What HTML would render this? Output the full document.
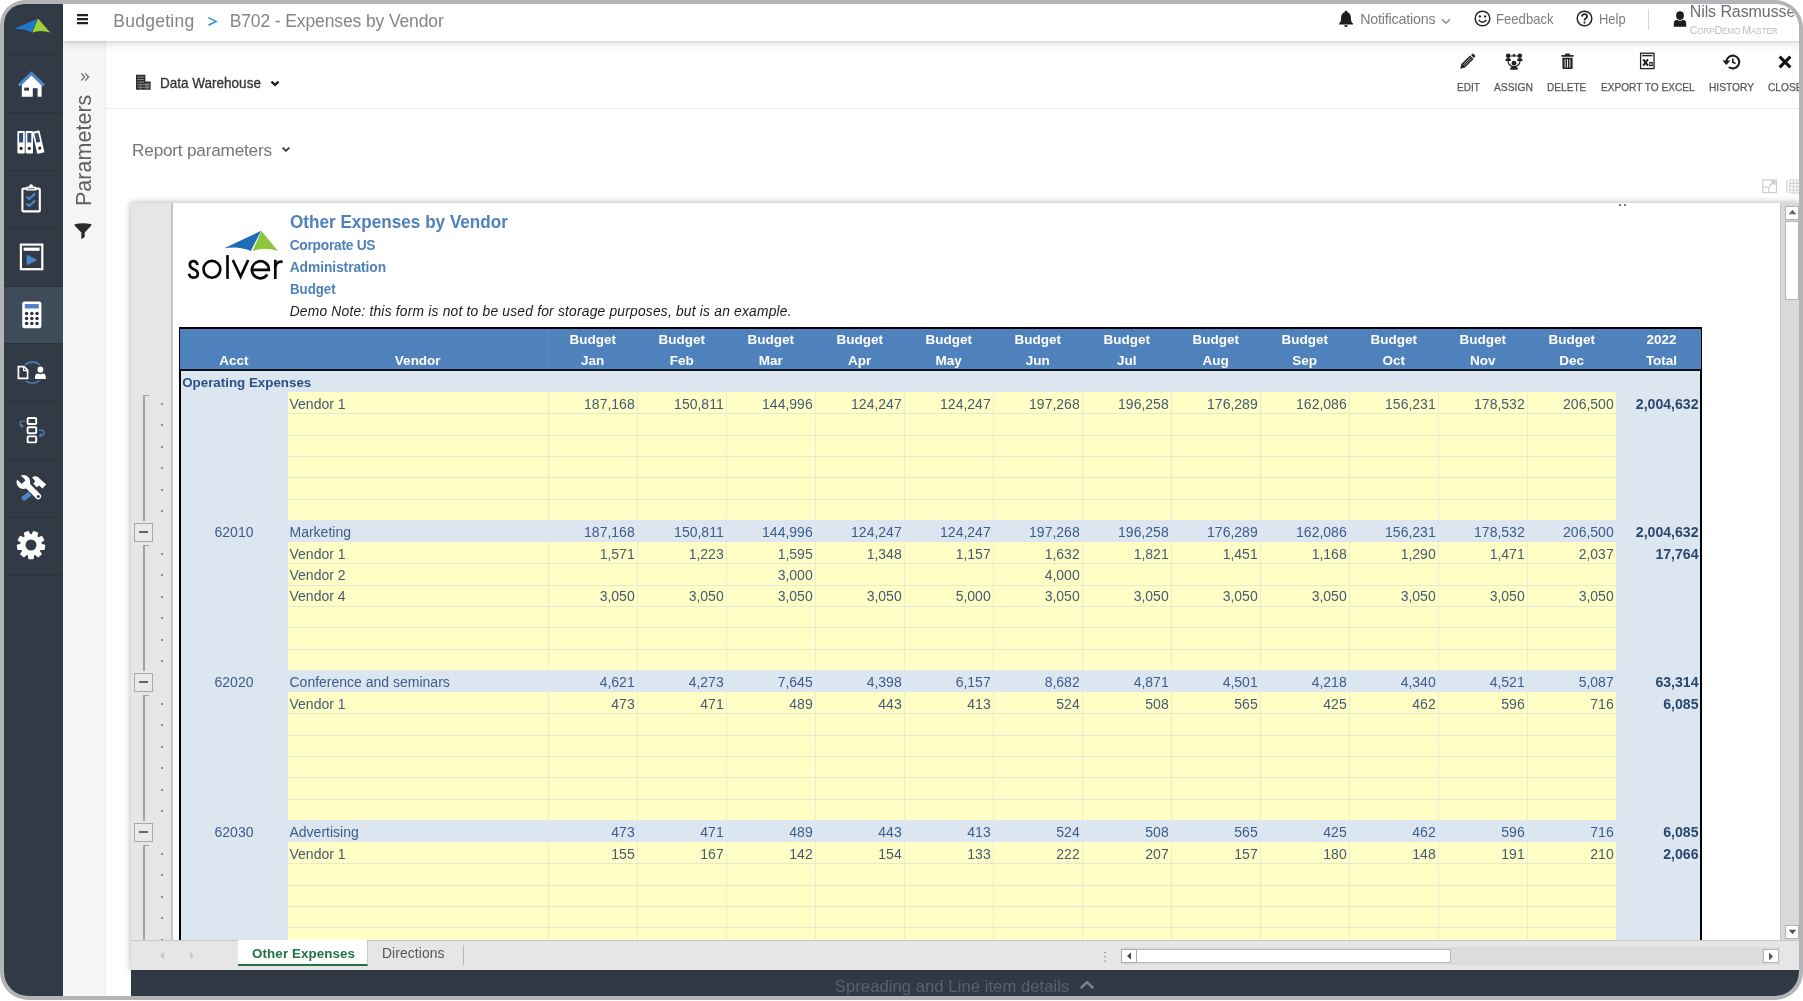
<!DOCTYPE html>
<html>
<head>
<meta charset="utf-8">
<title>B702 - Expenses by Vendor</title>
<style>
*{box-sizing:border-box;margin:0;padding:0}
html,body{width:1803px;height:1001px;overflow:hidden;background:#fff}
body{font-family:"Liberation Sans",sans-serif;position:relative;color:#333}
i,b{font-style:normal;display:block}
.frame{position:absolute;left:0;top:0;width:1803px;height:1000px;border-radius:25px 28px 28px 28px;background:#b2b4b7;overflow:hidden}
.inner{position:absolute;left:4px;top:4px;width:1795px;height:992px;border-radius:20px 24px 24px 24px;background:#fff;overflow:hidden}
.pg{will-change:transform;position:absolute;left:-4px;top:-4px;width:1803px;height:1001px}
.abs{position:absolute}
/* sidebar */
.side{position:absolute;left:0;top:0;width:63px;height:1001px;background:#323a45}
.side .sep{position:absolute;left:0;width:63px;height:1px;background:#2c333d}
.side .act{position:absolute;left:0;top:286.5px;width:63px;height:57.4px;background:#3e4b59}
.side svg{position:absolute}
/* topbar */
.top{position:absolute;left:63px;top:0;width:1740px;height:41px;background:#fff;box-shadow:0 1px 2px rgba(0,0,0,.11),0 3px 8px rgba(0,0,0,.12);z-index:5}
.top>span,.top>svg{position:absolute;white-space:nowrap}
.crumb{font-size:17px;color:#777;top:10px;letter-spacing:-.2px}
.tl{font-size:14.5px;color:#777;top:11px}
/* params column */
.pcol{position:absolute;left:63px;top:41px;width:43px;height:960px;background:#f5f5f5;border-right:1px solid #ececec}
.content{position:absolute;left:106px;top:41px;width:1697px;height:960px;background:#fff}
.tb span{position:absolute;font-size:12px;color:#555;top:80px;white-space:nowrap;transform:translateX(-50%)}
.tb svg{position:absolute}
/* spreadsheet */
.sheet{position:absolute;left:131px;top:203px;width:1669px;height:767px;background:#fff;box-shadow:0 0 7px rgba(0,0,0,.33);overflow:hidden}
.sh{position:absolute;left:-131px;top:-203px;width:1803px;height:1001px}
.gut{position:absolute;left:131px;top:203px;width:42px;height:737px;background:#e6e6e6;border-right:2px solid #c4c4c4}
.ol{position:absolute;left:142.6px;width:6px;border-left:2px solid #a2a2a2;border-top:1.6px solid #a2a2a2}
.dot{position:absolute;left:161px;width:2px;height:2px;background:#8d8d8d}
.mb{position:absolute;left:134px;width:19px;height:19px;border:1px solid #a9a9a9;background:#e9e9e9}
.mb b{position:absolute;left:4px;top:7.5px;width:9px;height:2px;background:#666}
.tbl{position:absolute;left:179px;top:327px;width:1523px;height:660px;border:2px solid #000;border-bottom:none;background:#dce6f1}
.thead{position:absolute;left:180px;top:329px;width:1521px;height:42.3px;background:#4f81bd;border-bottom:2px solid #111;z-index:4}
.thead span{position:absolute;color:#fff;font-weight:bold;font-size:13.5px;text-align:center;white-space:nowrap;line-height:16px}
.thead .h1{top:3px}
.thead .h2{top:24.1px}
.thead i{position:absolute;left:368px;top:0;width:1px;height:40.3px;background:#5c8ac3}
.row{position:absolute;left:0;width:1803px;height:21.43px}
.rv::before{content:"";box-sizing:border-box;position:absolute;left:288px;top:0;width:1327.5px;height:21.43px;background:#ffffc6;border-top:1px solid #e6e9d2}
.rv.f::before{border-top:none}
.rs::before{content:"";box-sizing:border-box;position:absolute;left:288px;top:0;width:1327.5px;height:21.43px;background:#dce6f1;z-index:2}
.c{position:absolute;top:.8px;height:21.43px;line-height:23.4px;font-size:14px;color:#465a74;white-space:nowrap;z-index:3}
.rs .c{color:#3e5c88}
.n{text-align:right}
.ac{text-align:center}
.c.t{font-weight:bold;color:#2c466e;font-size:14.1px}
.c.hd{font-weight:bold;color:#2e4f84;font-size:13.35px}
.vg{position:absolute;top:392px;width:1px;height:548px;background:rgba(200,212,228,.42);z-index:1}
.tabs{position:absolute;left:131px;top:940px;width:1669px;height:30px;background:#e6e6e6;border-top:1px solid #c6c6c6}
.bot{position:absolute;left:131px;top:969.6px;width:1672px;height:32px;background:#313946}
</style>
</head>
<body>
<div class="frame"><div class="inner"><div class="pg">

<!-- content background -->
<div class="content"></div>
<div class="pcol"></div>

<!-- toolbar area -->
<div class="abs" style="left:106px;top:108px;width:1697px;height:1px;background:#efefef"></div>
<svg style="position:absolute;left:135px;top:74px;" width="17" height="17" viewBox="0 0 17 17"><path d="M1 .8 H10.4 V7.6 H15.6 V15.8 H1 Z" fill="#2b2b2b"/><path d="M2.2 3.1 H9.2 M2.2 5.6 H9.2 M2.2 8.1 H9.2 M2.2 10.6 H14.6 M2.2 13.1 H14.6" stroke="#9a9a9a" stroke-width=".9"/><path d="M11 9 V15 M13 9 V15 M5.6 11.6 V15.8" stroke="#8aa" stroke-width=".8"/></svg>
<span style="left:159.8px;top:73.08px;font-size:14.2px;line-height:20px;color:#333;letter-spacing:0px;white-space:nowrap;position:absolute;transform-origin:0 50%;transform:scaleX(0.9526);-webkit-text-stroke:.3px #333;">Data Warehouse</span>
<svg style="position:absolute;left:270px;top:79.6px;" width="10" height="8" viewBox="0 0 10 8"><path d="M1.5 1.6 L5 5 L8.5 1.6" fill="none" stroke="#1a1a1a" stroke-width="2.3"/></svg>
<span style="left:132.1px;top:140.34px;font-size:17.2px;line-height:20px;color:#757575;letter-spacing:-0.21px;white-space:nowrap;position:absolute;">Report parameters</span>
<svg style="position:absolute;left:281px;top:146px;" width="10" height="8" viewBox="0 0 10 8"><path d="M1.6 1.6 L5 4.8 L8.4 1.6" fill="none" stroke="#333" stroke-width="1.8"/></svg>
<span style="left:1456.6px;top:76.91px;font-size:11.8px;line-height:20px;color:#555;letter-spacing:0px;white-space:nowrap;position:absolute;transform-origin:0 50%;transform:scaleX(0.8483);-webkit-text-stroke:.25px #555;">EDIT</span>
<span style="left:1494.1px;top:76.91px;font-size:11.8px;line-height:20px;color:#555;letter-spacing:0px;white-space:nowrap;position:absolute;transform-origin:0 50%;transform:scaleX(0.8724);-webkit-text-stroke:.25px #555;">ASSIGN</span>
<span style="left:1547.2px;top:76.91px;font-size:11.8px;line-height:20px;color:#555;letter-spacing:0px;white-space:nowrap;position:absolute;transform-origin:0 50%;transform:scaleX(0.8561);-webkit-text-stroke:.25px #555;">DELETE</span>
<span style="left:1600.5px;top:76.91px;font-size:11.8px;line-height:20px;color:#555;letter-spacing:0px;white-space:nowrap;position:absolute;transform-origin:0 50%;transform:scaleX(0.8572);-webkit-text-stroke:.25px #555;">EXPORT TO EXCEL</span>
<span style="left:1709px;top:76.91px;font-size:11.8px;line-height:20px;color:#555;letter-spacing:0px;white-space:nowrap;position:absolute;transform-origin:0 50%;transform:scaleX(0.8650);-webkit-text-stroke:.25px #555;">HISTORY</span>
<span style="left:1768.2px;top:76.91px;font-size:11.8px;line-height:20px;color:#555;letter-spacing:0px;white-space:nowrap;position:absolute;transform-origin:0 50%;transform:scaleX(0.8624);-webkit-text-stroke:.25px #555;">CLOSE</span>
<svg style="position:absolute;left:1459px;top:53px;" width="17" height="17" viewBox="0 0 17 17"><path d="M1.2 15.8 L2.4 11 L11 2.4 L14.6 6 L6 14.6 Z" fill="#222"/><path d="M12 2 L13.2 .9 Q13.9 .3 14.6 1 L16 2.4 Q16.7 3.1 16 3.8 L15 5 Z" fill="#222"/><path d="M4 11.8 L11.4 4.4 M5.2 13 L12.6 5.6" stroke="#fff" stroke-width=".6"/></svg>
<svg style="position:absolute;left:1504.5px;top:52.5px;" width="18" height="18" viewBox="0 0 18 18"><circle cx="3.2" cy="2.8" r="2.3" fill="#222"/><circle cx="14.8" cy="2.8" r="2.3" fill="#222"/><circle cx="9" cy="2.2" r="1.3" fill="#222"/><path d="M.4 8 Q.4 5 3.2 5 Q6 5 6 8 Z M12 8 Q12 5 14.8 5 Q17.6 5 17.6 8 Z" fill="#222"/><path d="M3 7.4 Q3 12 7 13 M15 7.4 Q15 12 11 13 M4.6 3 H13.4" fill="none" stroke="#222" stroke-width="1.2"/><circle cx="9" cy="10.2" r="2.4" fill="#222"/><path d="M5.2 16.8 Q5.2 12.8 9 12.8 Q12.8 12.8 12.8 16.8 Z" fill="#222"/></svg>
<svg style="position:absolute;left:1559.5px;top:52.9px;" width="15" height="17" viewBox="0 0 15 17"><path d="M5.2 .6 H9.8 V2 H13.6 V3.8 H1.4 V2 H5.2 Z" fill="#222"/><path d="M2.4 4.8 H12.6 V15 Q12.6 16 11.6 16 H3.4 Q2.4 16 2.4 15 Z" fill="#222"/><path d="M5.1 6.2 V14.6 M7.5 6.2 V14.6 M9.9 6.2 V14.6" stroke="#fff" stroke-width=".9"/></svg>
<svg style="position:absolute;left:1638.5px;top:51.8px;" width="17" height="18" viewBox="0 0 17 18"><rect x="1.6" y="1.2" width="13.4" height="15.4" fill="#fff" stroke="#222" stroke-width="1.3"/><path d="M3.2 3.6 H13.4" stroke="#222" stroke-width="1.5"/><path d="M4.2 7.4 L9 13.6 M9 7.4 L4.2 13.6" stroke="#1a1a1a" stroke-width="1.9"/><path d="M10.8 10.6 H13.2 V13.6 H10.8 Z" fill="none" stroke="#222" stroke-width="1.1"/></svg>
<svg style="position:absolute;left:1721.5px;top:52.5px;" width="19" height="18" viewBox="0 0 19 18"><path d="M4.4 9 A6.4 6.4 0 1 1 6.8 14" fill="none" stroke="#1c1c1c" stroke-width="2.1"/><path d="M.4 7.4 H8.4 L4.4 12 Z" fill="#1c1c1c"/><path d="M10.8 5.6 V9.3 L13.6 10.4" fill="none" stroke="#1c1c1c" stroke-width="1.6"/></svg>
<svg style="position:absolute;left:1777.5px;top:54.5px;" width="14" height="14" viewBox="0 0 14 14"><path d="M1.6 1.6 L12.4 12.4 M12.4 1.6 L1.6 12.4" stroke="#111" stroke-width="3"/></svg>
<svg style="position:absolute;left:1762px;top:179px;" width="16" height="15" viewBox="0 0 16 15"><rect x=".8" y=".8" width="13.6" height="12.8" fill="none" stroke="#cfcfcf" stroke-width="1.2"/><path d="M1.2 8.2 H6.8 V13.4" fill="none" stroke="#cfcfcf" stroke-width="1.2"/><path d="M7.6 7 L12.4 2.4 M8.8 2.2 H12.6 V6" fill="none" stroke="#c4c4c4" stroke-width="1.4"/></svg>
<svg style="position:absolute;left:1786px;top:179px;" width="14" height="15" viewBox="0 0 14 15"><path d="M1 1 V14 M3.4 1 H14 M3.4 4.4 H14 M3.4 7.8 H14 M3.4 11.2 H14 M3.4 14 H14 M3.8 1 V14 M7.4 1 V14 M11 1 V14" fill="none" stroke="#cfcfcf" stroke-width="1.1"/></svg>
<svg style="position:absolute;left:80px;top:71.5px;" width="10" height="10" viewBox="0 0 10 10"><path d="M1.2 1.4 L4.6 5 L1.2 8.6 M5.2 1.4 L8.6 5 L5.2 8.6" fill="none" stroke="#666" stroke-width="1.2"/></svg>
<span style="position:absolute;left:91px;top:206.3px;font-size:21.4px;line-height:20px;color:#5f5f5f;white-space:nowrap;transform-origin:0 0;transform:rotate(-90deg) translateY(-17.42px);letter-spacing:0.08px">Parameters</span>
<svg style="position:absolute;left:74px;top:223px;" width="18" height="17" viewBox="0 0 18 17"><path d="M.6 1.2 Q9 -0.8 17.4 1.2 V2.6 L10.7 9.4 V14 L7.3 16.2 V9.4 L.6 2.6 Z" fill="#2b2b2b"/></svg>

<!-- spreadsheet -->
<div class="sheet"><div class="sh">
<div class="gut"></div>
<i class="ol" style="top:395.13px;height:126.17px"></i>
<i class="dot" style="top:402.94px"></i>
<i class="dot" style="top:424.37px"></i>
<i class="dot" style="top:445.8px"></i>
<i class="dot" style="top:467.23px"></i>
<i class="dot" style="top:488.66px"></i>
<i class="dot" style="top:510.09px"></i>
<i class="mb" style="top:522.91px"><b></b></i>
<i class="ol" style="top:545.13px;height:126.17px"></i>
<i class="dot" style="top:552.94px"></i>
<i class="dot" style="top:574.37px"></i>
<i class="dot" style="top:595.8px"></i>
<i class="dot" style="top:617.23px"></i>
<i class="dot" style="top:638.66px"></i>
<i class="dot" style="top:660.09px"></i>
<i class="mb" style="top:672.91px"><b></b></i>
<i class="ol" style="top:695.13px;height:126.17px"></i>
<i class="dot" style="top:702.94px"></i>
<i class="dot" style="top:724.37px"></i>
<i class="dot" style="top:745.8px"></i>
<i class="dot" style="top:767.23px"></i>
<i class="dot" style="top:788.66px"></i>
<i class="dot" style="top:810.09px"></i>
<i class="mb" style="top:822.91px"><b></b></i>
<i class="ol" style="top:845.13px;height:94.87px"></i>
<i class="dot" style="top:852.94px"></i>
<i class="dot" style="top:874.37px"></i>
<i class="dot" style="top:895.8px"></i>
<i class="dot" style="top:917.23px"></i>
<i class="dot" style="top:938.66px"></i>
<svg style="position:absolute;left:180px;top:225px;" width="110" height="62" viewBox="0 0 110 62"><path d="M44.3 23.3 Q59 20.6 70.8 26 L81.1 5.8 Z" fill="#1f6cb6"/><path d="M81.5 6 L98 26 Q84.6 21.6 72.6 26 Z" fill="#8cc63f"/><g fill="none" stroke="#0a0a0a" stroke-width="2.7"><path d="M17.6 40 Q16.6 36 13.3 36 Q9.8 36.2 9.8 39.6 Q9.8 42.6 13.7 44.2 Q17.9 45.8 17.9 49 Q17.7 52.6 13.4 52.7 Q9.8 52.6 8.9 48.8"/><circle cx="31.9" cy="44.35" r="8.4"/><path d="M47.5 30.1 V53.9"/><path d="M52.8 35 L60.6 51.6 L68.2 35" stroke-linejoin="miter" stroke-miterlimit="8"/><path d="M71.8 44.9 H88.9 A8.5 8.5 0 1 0 87.4 49.6"/><path d="M95.3 34.8 V53.9 M95.3 43 Q95.6 36 102.6 36.8"/></g></svg>
<span style="left:289.7px;top:212.16px;font-size:18.6px;line-height:20px;color:#4f81bd;letter-spacing:0px;white-space:nowrap;position:absolute;font-weight:bold;transform-origin:0 50%;transform:scaleX(0.9209);">Other Expenses by Vendor</span>
<span style="left:289.7px;top:235.62px;font-size:13.8px;line-height:20px;color:#4f81bd;letter-spacing:-0.28px;white-space:nowrap;position:absolute;font-weight:bold;">Corporate US</span>
<span style="left:289.7px;top:257.92px;font-size:13.8px;line-height:20px;color:#4f81bd;letter-spacing:-0.07px;white-space:nowrap;position:absolute;font-weight:bold;">Administration</span>
<span style="left:289.7px;top:280.22px;font-size:13.8px;line-height:20px;color:#4f81bd;letter-spacing:0px;white-space:nowrap;position:absolute;font-weight:bold;transform-origin:0 50%;transform:scaleX(0.9595);">Budget</span>
<span style="left:289.7px;top:302.42px;font-size:13.8px;line-height:20px;color:#1a1a1a;letter-spacing:0.21px;white-space:nowrap;position:absolute;font-style:italic;">Demo Note: this form is not to be used for storage purposes, but is an example.</span>
<i style="position:absolute;left:1619px;top:204px;width:2px;height:2px;background:#777"></i><i style="position:absolute;left:1624px;top:204px;width:2px;height:2px;background:#777"></i>
<div class="tbl"></div>
<div class="row rh" style="top:370.3px">
<span class="c hd" style="left:182.2px">Operating Expenses</span>
</div>
<div class="row rv f" style="top:391.73px">
<span class="c nm" style="left:289.5px">Vendor 1</span>
<span class="c n" style="left:547.5px;width:87.2px">187,168</span>
<span class="c n" style="left:636.5px;width:87.2px">150,811</span>
<span class="c n" style="left:725.5px;width:87.2px">144,996</span>
<span class="c n" style="left:814.5px;width:87.2px">124,247</span>
<span class="c n" style="left:903.5px;width:87.2px">124,247</span>
<span class="c n" style="left:992.5px;width:87.2px">197,268</span>
<span class="c n" style="left:1081.5px;width:87.2px">196,258</span>
<span class="c n" style="left:1170.5px;width:87.2px">176,289</span>
<span class="c n" style="left:1259.5px;width:87.2px">162,086</span>
<span class="c n" style="left:1348.5px;width:87.2px">156,231</span>
<span class="c n" style="left:1437.5px;width:87.2px">178,532</span>
<span class="c n" style="left:1526.5px;width:87.2px">206,500</span>
<span class="c n t" style="left:1615.5px;width:83px">2,004,632</span>
</div>
<div class="row rv" style="top:413.16px">
</div>
<div class="row rv" style="top:434.59px">
</div>
<div class="row rv" style="top:456.01px">
</div>
<div class="row rv" style="top:477.44px">
</div>
<div class="row rv" style="top:498.87px">
</div>
<div class="row rs" style="top:520.3px">
<span class="c ac" style="left:180px;width:108px">62010</span>
<span class="c nm" style="left:289.5px">Marketing</span>
<span class="c n" style="left:547.5px;width:87.2px">187,168</span>
<span class="c n" style="left:636.5px;width:87.2px">150,811</span>
<span class="c n" style="left:725.5px;width:87.2px">144,996</span>
<span class="c n" style="left:814.5px;width:87.2px">124,247</span>
<span class="c n" style="left:903.5px;width:87.2px">124,247</span>
<span class="c n" style="left:992.5px;width:87.2px">197,268</span>
<span class="c n" style="left:1081.5px;width:87.2px">196,258</span>
<span class="c n" style="left:1170.5px;width:87.2px">176,289</span>
<span class="c n" style="left:1259.5px;width:87.2px">162,086</span>
<span class="c n" style="left:1348.5px;width:87.2px">156,231</span>
<span class="c n" style="left:1437.5px;width:87.2px">178,532</span>
<span class="c n" style="left:1526.5px;width:87.2px">206,500</span>
<span class="c n t" style="left:1615.5px;width:83px">2,004,632</span>
</div>
<div class="row rv f" style="top:541.73px">
<span class="c nm" style="left:289.5px">Vendor 1</span>
<span class="c n" style="left:547.5px;width:87.2px">1,571</span>
<span class="c n" style="left:636.5px;width:87.2px">1,223</span>
<span class="c n" style="left:725.5px;width:87.2px">1,595</span>
<span class="c n" style="left:814.5px;width:87.2px">1,348</span>
<span class="c n" style="left:903.5px;width:87.2px">1,157</span>
<span class="c n" style="left:992.5px;width:87.2px">1,632</span>
<span class="c n" style="left:1081.5px;width:87.2px">1,821</span>
<span class="c n" style="left:1170.5px;width:87.2px">1,451</span>
<span class="c n" style="left:1259.5px;width:87.2px">1,168</span>
<span class="c n" style="left:1348.5px;width:87.2px">1,290</span>
<span class="c n" style="left:1437.5px;width:87.2px">1,471</span>
<span class="c n" style="left:1526.5px;width:87.2px">2,037</span>
<span class="c n t" style="left:1615.5px;width:83px">17,764</span>
</div>
<div class="row rv" style="top:563.16px">
<span class="c nm" style="left:289.5px">Vendor 2</span>
<span class="c n" style="left:725.5px;width:87.2px">3,000</span>
<span class="c n" style="left:992.5px;width:87.2px">4,000</span>
</div>
<div class="row rv" style="top:584.59px">
<span class="c nm" style="left:289.5px">Vendor 4</span>
<span class="c n" style="left:547.5px;width:87.2px">3,050</span>
<span class="c n" style="left:636.5px;width:87.2px">3,050</span>
<span class="c n" style="left:725.5px;width:87.2px">3,050</span>
<span class="c n" style="left:814.5px;width:87.2px">3,050</span>
<span class="c n" style="left:903.5px;width:87.2px">5,000</span>
<span class="c n" style="left:992.5px;width:87.2px">3,050</span>
<span class="c n" style="left:1081.5px;width:87.2px">3,050</span>
<span class="c n" style="left:1170.5px;width:87.2px">3,050</span>
<span class="c n" style="left:1259.5px;width:87.2px">3,050</span>
<span class="c n" style="left:1348.5px;width:87.2px">3,050</span>
<span class="c n" style="left:1437.5px;width:87.2px">3,050</span>
<span class="c n" style="left:1526.5px;width:87.2px">3,050</span>
</div>
<div class="row rv" style="top:606.01px">
</div>
<div class="row rv" style="top:627.44px">
</div>
<div class="row rv" style="top:648.87px">
</div>
<div class="row rs" style="top:670.3px">
<span class="c ac" style="left:180px;width:108px">62020</span>
<span class="c nm" style="left:289.5px">Conference and seminars</span>
<span class="c n" style="left:547.5px;width:87.2px">4,621</span>
<span class="c n" style="left:636.5px;width:87.2px">4,273</span>
<span class="c n" style="left:725.5px;width:87.2px">7,645</span>
<span class="c n" style="left:814.5px;width:87.2px">4,398</span>
<span class="c n" style="left:903.5px;width:87.2px">6,157</span>
<span class="c n" style="left:992.5px;width:87.2px">8,682</span>
<span class="c n" style="left:1081.5px;width:87.2px">4,871</span>
<span class="c n" style="left:1170.5px;width:87.2px">4,501</span>
<span class="c n" style="left:1259.5px;width:87.2px">4,218</span>
<span class="c n" style="left:1348.5px;width:87.2px">4,340</span>
<span class="c n" style="left:1437.5px;width:87.2px">4,521</span>
<span class="c n" style="left:1526.5px;width:87.2px">5,087</span>
<span class="c n t" style="left:1615.5px;width:83px">63,314</span>
</div>
<div class="row rv f" style="top:691.73px">
<span class="c nm" style="left:289.5px">Vendor 1</span>
<span class="c n" style="left:547.5px;width:87.2px">473</span>
<span class="c n" style="left:636.5px;width:87.2px">471</span>
<span class="c n" style="left:725.5px;width:87.2px">489</span>
<span class="c n" style="left:814.5px;width:87.2px">443</span>
<span class="c n" style="left:903.5px;width:87.2px">413</span>
<span class="c n" style="left:992.5px;width:87.2px">524</span>
<span class="c n" style="left:1081.5px;width:87.2px">508</span>
<span class="c n" style="left:1170.5px;width:87.2px">565</span>
<span class="c n" style="left:1259.5px;width:87.2px">425</span>
<span class="c n" style="left:1348.5px;width:87.2px">462</span>
<span class="c n" style="left:1437.5px;width:87.2px">596</span>
<span class="c n" style="left:1526.5px;width:87.2px">716</span>
<span class="c n t" style="left:1615.5px;width:83px">6,085</span>
</div>
<div class="row rv" style="top:713.16px">
</div>
<div class="row rv" style="top:734.59px">
</div>
<div class="row rv" style="top:756.01px">
</div>
<div class="row rv" style="top:777.44px">
</div>
<div class="row rv" style="top:798.87px">
</div>
<div class="row rs" style="top:820.3px">
<span class="c ac" style="left:180px;width:108px">62030</span>
<span class="c nm" style="left:289.5px">Advertising</span>
<span class="c n" style="left:547.5px;width:87.2px">473</span>
<span class="c n" style="left:636.5px;width:87.2px">471</span>
<span class="c n" style="left:725.5px;width:87.2px">489</span>
<span class="c n" style="left:814.5px;width:87.2px">443</span>
<span class="c n" style="left:903.5px;width:87.2px">413</span>
<span class="c n" style="left:992.5px;width:87.2px">524</span>
<span class="c n" style="left:1081.5px;width:87.2px">508</span>
<span class="c n" style="left:1170.5px;width:87.2px">565</span>
<span class="c n" style="left:1259.5px;width:87.2px">425</span>
<span class="c n" style="left:1348.5px;width:87.2px">462</span>
<span class="c n" style="left:1437.5px;width:87.2px">596</span>
<span class="c n" style="left:1526.5px;width:87.2px">716</span>
<span class="c n t" style="left:1615.5px;width:83px">6,085</span>
</div>
<div class="row rv f" style="top:841.73px">
<span class="c nm" style="left:289.5px">Vendor 1</span>
<span class="c n" style="left:547.5px;width:87.2px">155</span>
<span class="c n" style="left:636.5px;width:87.2px">167</span>
<span class="c n" style="left:725.5px;width:87.2px">142</span>
<span class="c n" style="left:814.5px;width:87.2px">154</span>
<span class="c n" style="left:903.5px;width:87.2px">133</span>
<span class="c n" style="left:992.5px;width:87.2px">222</span>
<span class="c n" style="left:1081.5px;width:87.2px">207</span>
<span class="c n" style="left:1170.5px;width:87.2px">157</span>
<span class="c n" style="left:1259.5px;width:87.2px">180</span>
<span class="c n" style="left:1348.5px;width:87.2px">148</span>
<span class="c n" style="left:1437.5px;width:87.2px">191</span>
<span class="c n" style="left:1526.5px;width:87.2px">210</span>
<span class="c n t" style="left:1615.5px;width:83px">2,066</span>
</div>
<div class="row rv" style="top:863.16px">
</div>
<div class="row rv" style="top:884.59px">
</div>
<div class="row rv" style="top:906.01px">
</div>
<div class="row rv" style="top:927.44px">
</div>
<i class="vg" style="left:637px"></i>
<i class="vg" style="left:726px"></i>
<i class="vg" style="left:815px"></i>
<i class="vg" style="left:904px"></i>
<i class="vg" style="left:993px"></i>
<i class="vg" style="left:1082px"></i>
<i class="vg" style="left:1171px"></i>
<i class="vg" style="left:1260px"></i>
<i class="vg" style="left:1349px"></i>
<i class="vg" style="left:1438px"></i>
<i class="vg" style="left:1527px"></i>
<i class="vg" style="left:548px"></i>
<div class="thead"><i></i>
<span class="h2" style="left:0px;width:108px">Acct</span>
<span class="h2" style="left:108px;width:259.5px">Vendor</span>
<span class="h1" style="left:368.2px;width:89px">Budget</span><span class="h2" style="left:368.2px;width:89px">Jan</span>
<span class="h1" style="left:457.2px;width:89px">Budget</span><span class="h2" style="left:457.2px;width:89px">Feb</span>
<span class="h1" style="left:546.2px;width:89px">Budget</span><span class="h2" style="left:546.2px;width:89px">Mar</span>
<span class="h1" style="left:635.2px;width:89px">Budget</span><span class="h2" style="left:635.2px;width:89px">Apr</span>
<span class="h1" style="left:724.2px;width:89px">Budget</span><span class="h2" style="left:724.2px;width:89px">May</span>
<span class="h1" style="left:813.2px;width:89px">Budget</span><span class="h2" style="left:813.2px;width:89px">Jun</span>
<span class="h1" style="left:902.2px;width:89px">Budget</span><span class="h2" style="left:902.2px;width:89px">Jul</span>
<span class="h1" style="left:991.2px;width:89px">Budget</span><span class="h2" style="left:991.2px;width:89px">Aug</span>
<span class="h1" style="left:1080.2px;width:89px">Budget</span><span class="h2" style="left:1080.2px;width:89px">Sep</span>
<span class="h1" style="left:1169.2px;width:89px">Budget</span><span class="h2" style="left:1169.2px;width:89px">Oct</span>
<span class="h1" style="left:1258.2px;width:89px">Budget</span><span class="h2" style="left:1258.2px;width:89px">Nov</span>
<span class="h1" style="left:1347.2px;width:89px">Budget</span><span class="h2" style="left:1347.2px;width:89px">Dec</span>
<span class="h1" style="left:1441px;width:81px">2022</span><span class="h2" style="left:1441px;width:81px">Total</span>
</div>
<i style="position:absolute;left:1780px;top:203px;width:21px;height:737px;background:#d9d9d9;border-left:1px solid #c4c4c4"></i>
<i style="position:absolute;left:1784.5px;top:205.5px;width:14.5px;height:14px;background:#fff;border:1px solid #b3b3b3"></i>
<svg style="position:absolute;left:1787.6px;top:209px;" width="9" height="6" viewBox="0 0 9 6"><path d="M.6 5.2 L4.5 .8 L8.4 5.2 Z" fill="#666"/></svg>
<i style="position:absolute;left:1784.5px;top:220.5px;width:14.5px;height:79px;background:#fff;border:1px solid #b3b3b3"></i>
<i style="position:absolute;left:1784.5px;top:925px;width:14.5px;height:13.5px;background:#fff;border:1px solid #b3b3b3"></i>
<svg style="position:absolute;left:1787.6px;top:929.4px;" width="9" height="6" viewBox="0 0 9 6"><path d="M.6 .8 L4.5 5.2 L8.4 .8 Z" fill="#555"/></svg>
<div class="tabs"></div>
<i style="position:absolute;left:238px;top:940px;width:130px;height:25.8px;background:#fff;border-bottom:2px solid #217346;border-right:1px solid #c9c9c9"></i>
<span style="left:252.1px;top:943.56px;font-size:13.4px;line-height:20px;color:#217346;letter-spacing:0.07px;white-space:nowrap;position:absolute;font-weight:bold;">Other Expenses</span>
<span style="left:381.9px;top:944.42px;font-size:13.8px;line-height:20px;color:#555;letter-spacing:0.14px;white-space:nowrap;position:absolute;">Directions</span>
<i style="position:absolute;left:463px;top:944.5px;width:1.3px;height:20px;background:#b7b7b7"></i>
<svg style="position:absolute;left:159px;top:951px;" width="6" height="9" viewBox="0 0 6 9"><path d="M5 .8 L1.2 4.5 L5 8.2 Z" fill="#c6c6c6"/></svg>
<svg style="position:absolute;left:189px;top:951px;" width="6" height="9" viewBox="0 0 6 9"><path d="M1 .8 L4.8 4.5 L1 8.2 Z" fill="#c6c6c6"/></svg>
<i style="position:absolute;left:1104.3px;top:951.5px;width:1.4px;height:1.6px;background:#999;box-shadow:0 4.3px 0 #999,0 8.6px 0 #999"></i>
<i style="position:absolute;left:1120.5px;top:947px;width:659px;height:17.5px;background:#dcdcdc"></i>
<i style="position:absolute;left:1120.5px;top:949px;width:16px;height:14px;background:#fff;border:1px solid #ababab"></i>
<svg style="position:absolute;left:1125.5px;top:952px;" width="6" height="8" viewBox="0 0 6 8"><path d="M5 .4 L1 4 L5 7.6 Z" fill="#444"/></svg>
<i style="position:absolute;left:1136.5px;top:949px;width:314px;height:14px;background:#fff;border:1px solid #b5b5b5;border-left:none"></i>
<i style="position:absolute;left:1763px;top:948.5px;width:15.5px;height:14.5px;background:#fff;border:1px solid #b5b5b5"></i>
<svg style="position:absolute;left:1768px;top:951.5px;" width="6" height="9" viewBox="0 0 6 9"><path d="M1 .6 L5 4.5 L1 8.4 Z" fill="#555"/></svg>
</div></div>

<div class="bot"></div>
<span style="left:834.8px;top:976.85px;font-size:16.6px;line-height:20px;color:#59616c;letter-spacing:0.07px;white-space:nowrap;position:absolute;">Spreading and Line item details</span>
<svg style="position:absolute;left:1078.5px;top:979.5px;" width="16" height="10" viewBox="0 0 16 10"><path d="M1.8 8.2 L8 2.2 L14.2 8.2" fill="none" stroke="#7d848d" stroke-width="2.4"/></svg>

<!-- top bar -->
<div class="top">
<svg style="position:absolute;left:13.5px;top:13.5px;" width="11.5" height="11" viewBox="0 0 11.5 11"><path d="M0 1.2H11.5M0 5.2H11.5M0 9.2H11.5" stroke="#222" stroke-width="2.2"/></svg>
<span style="left:50.2px;top:10.54px;font-size:17.5px;line-height:20px;color:#858585;letter-spacing:0.27px;white-space:nowrap;position:absolute;">Budgeting</span>
<svg style="position:absolute;left:143.5px;top:16px;" width="11" height="11" viewBox="0 0 11 11"><path d="M1.5 1.6 L9 5.4 L1.5 9.2" fill="none" stroke="#3f8ad8" stroke-width="1.6"/></svg>
<span style="left:166.7px;top:10.54px;font-size:17.5px;line-height:20px;color:#858585;letter-spacing:-0.12px;white-space:nowrap;position:absolute;">B702 - Expenses by Vendor</span>
<svg style="position:absolute;left:1275px;top:10px;" width="16" height="18" viewBox="0 0 16 18"><path d="M8 .8 C8.9 .8 9.4 1.4 9.4 2.2 C12 3 12.9 5.3 12.9 8 C12.9 11.2 13.6 12.4 15 13.6 V14.4 H1 V13.6 C2.4 12.4 3.1 11.2 3.1 8 C3.1 5.3 4 3 6.6 2.2 C6.6 1.4 7.1 .8 8 .8 Z M6.2 15.2 H9.8 C9.8 16.3 9 17 8 17 C7 17 6.2 16.3 6.2 15.2 Z" fill="#1d1d1d"/></svg>
<span style="left:1297.2px;top:9.45px;font-size:14.3px;line-height:20px;color:#7d7d7d;letter-spacing:-0.2px;white-space:nowrap;position:absolute;">Notifications</span>
<svg style="position:absolute;left:1378px;top:18px;" width="10" height="7" viewBox="0 0 10 7"><path d="M1 1.2 L5 5.2 L9 1.2" fill="none" stroke="#8a8a8a" stroke-width="1.5"/></svg>
<svg style="position:absolute;left:1410.5px;top:10.2px;" width="17" height="17" viewBox="0 0 17 17"><circle cx="8.5" cy="8.5" r="7.3" fill="none" stroke="#222" stroke-width="1.5"/><circle cx="5.9" cy="6.5" r="1.15" fill="#222"/><circle cx="11.1" cy="6.5" r="1.15" fill="#222"/><path d="M4.6 10 Q8.5 14.4 12.4 10" fill="none" stroke="#222" stroke-width="1.4"/></svg>
<span style="left:1433.3px;top:9.45px;font-size:14.3px;line-height:20px;color:#7d7d7d;letter-spacing:0px;white-space:nowrap;position:absolute;transform-origin:0 50%;transform:scaleX(0.9172);">Feedback</span>
<svg style="position:absolute;left:1513.3px;top:10.2px;" width="17" height="17" viewBox="0 0 17 17"><circle cx="8.5" cy="8.5" r="7.3" fill="none" stroke="#222" stroke-width="1.5"/><path d="M5.9 6.6 Q6 4.2 8.5 4.2 Q11 4.2 11 6.4 Q11 7.8 9.6 8.5 Q8.5 9.1 8.5 10.4" fill="none" stroke="#222" stroke-width="1.7"/><circle cx="8.5" cy="12.6" r="1.05" fill="#222"/></svg>
<span style="left:1536.4px;top:9.45px;font-size:14.3px;line-height:20px;color:#7d7d7d;letter-spacing:0px;white-space:nowrap;position:absolute;transform-origin:0 50%;transform:scaleX(0.9044);">Help</span>
<i style="position:absolute;left:1584.5px;top:9px;width:1px;height:21px;background:#d4d4d4"></i>
<svg style="position:absolute;left:1610px;top:11px;" width="14" height="17" viewBox="0 0 14 17"><ellipse cx="7" cy="4.6" rx="3.9" ry="4.3" fill="#1d1d1d"/><path d="M.8 15.8 V12.4 Q.8 9.2 4 8.8 Q7 10.6 10 8.8 Q13.2 9.2 13.2 12.4 V15.8 Z" fill="#1d1d1d"/></svg>
<span style="left:1626.7px;top:1.86px;font-size:16px;line-height:20px;color:#6f6f6f;letter-spacing:-0.08px;white-space:nowrap;position:absolute;">Nils Rasmussen</span>
<span style="left:1626.7px;top:19.76px;font-size:8.2px;line-height:20px;color:#bdbdbd;letter-spacing:0px;white-space:nowrap;position:absolute;letter-spacing:-.15px;"><span style="font-size:10.6px">C</span>ORP<span style="font-size:10.6px">D</span>EMO <span style="font-size:10.6px">M</span>ASTER</span>
</div>

<!-- sidebar -->
<div class="side">
<div class="act"></div>
<i class="sep" style="top:54.0px"></i>
<i class="sep" style="top:111.9px"></i>
<i class="sep" style="top:169.7px"></i>
<i class="sep" style="top:227.6px"></i>
<i class="sep" style="top:285.5px"></i>
<i class="sep" style="top:343.3px"></i>
<i class="sep" style="top:401.2px"></i>
<i class="sep" style="top:459.1px"></i>
<i class="sep" style="top:517.0px"></i>
<i class="sep" style="top:574.8px"></i>
<svg style="position:absolute;left:10px;top:14px;" width="46" height="24" viewBox="0 0 46 24"><path d="M4 15 Q14 14.4 21.6 18.4 L27.6 4.6 Z" fill="#2277c6"/><path d="M28 4.4 L40.2 18.6 Q30 15.4 22.2 18.6 Z" fill="#9fcf3c"/></svg>
<svg style="position:absolute;left:16px;top:70px;" width="32" height="29" viewBox="0 0 32 29"><path d="M5.8 11 L15.4 3 L25.6 11.4 V26.8 H5.8 Z" fill="#fff"/><path d="M2.8 15.6 L15.4 3.4 L28 15.6" fill="none" stroke="#4a86c6" stroke-width="3.2" stroke-linejoin="miter"/><rect x="8.2" y="17.6" width="4.8" height="3" fill="#323a45"/><rect x="16.8" y="18.2" width="4.8" height="8.8" fill="#323a45"/></svg>
<svg style="position:absolute;left:16px;top:129.5px;" width="32" height="26" viewBox="0 0 32 26"><rect x="1.4" y="1" width="7.4" height="22.4" rx=".8" fill="#fff"/><rect x="3.1" y="3" width="4" height="9.4" fill="#2c4d7a"/><circle cx="5.1" cy="18.4" r="1.55" fill="#222"/><rect x="9.6" y="1" width="7.4" height="22.4" rx=".8" fill="#fff"/><rect x="11.3" y="3" width="4" height="9.4" fill="#2c4d7a"/><circle cx="13.3" cy="18.4" r="1.55" fill="#222"/><g transform="rotate(-13 22 12)"><rect x="18.6" y="1" width="7.4" height="22.4" rx=".8" fill="#fff"/><rect x="20.3" y="3" width="4" height="9.4" fill="#2c4d7a"/><circle cx="22.3" cy="18.4" r="1.55" fill="#222"/></g></svg>
<svg style="position:absolute;left:19px;top:183px;" width="25" height="31" viewBox="0 0 25 31"><rect x="3.4" y="5.6" width="17.4" height="22.8" rx="1" fill="none" stroke="#fff" stroke-width="2.1"/><path d="M7 7.6 V5 Q7 3.6 8.6 3.6 H10 Q10.4 1.2 12.1 1.2 Q13.8 1.2 14.2 3.6 H15.6 Q17.2 3.6 17.2 5 V7.6 Z" fill="#fff"/><rect x="8.6" y="5" width="7" height="1.2" fill="#7b8794"/><path d="M7.6 13.6 L10.2 16 L16.2 10.4 M7.6 20.6 L10.2 23 L16.2 17.4" fill="none" stroke="#4a86c6" stroke-width="2.2"/></svg>
<svg style="position:absolute;left:18px;top:242px;" width="27" height="30" viewBox="0 0 27 30"><rect x="2.9" y="2.6" width="21.4" height="24.6" fill="none" stroke="#fff" stroke-width="2.2"/><rect x="5.6" y="5.6" width="16" height="3.2" fill="#fff"/><path d="M8.6 12.4 L19.6 18 L8.6 23.6 Z" fill="#4a86c6"/></svg>
<svg style="position:absolute;left:20px;top:300px;" width="23" height="30" viewBox="0 0 23 30"><rect x="2.2" y="1.4" width="19.2" height="26.8" rx="2.2" fill="#fff"/><rect x="4.8" y="4" width="14" height="4.6" rx=".6" fill="#4a86c6"/><circle cx="6.6" cy="13.4" r="1.75" fill="#2d3540"/><circle cx="11.8" cy="13.4" r="1.75" fill="#2d3540"/><circle cx="17" cy="13.4" r="1.75" fill="#2d3540"/><circle cx="6.6" cy="18.4" r="1.75" fill="#2d3540"/><circle cx="11.8" cy="18.4" r="1.75" fill="#2d3540"/><circle cx="17" cy="18.4" r="1.75" fill="#2d3540"/><circle cx="6.6" cy="23.4" r="1.75" fill="#2d3540"/><circle cx="11.8" cy="23.4" r="1.75" fill="#2d3540"/><circle cx="17" cy="23.4" r="1.75" fill="#2d3540"/></svg>
<svg style="position:absolute;left:14px;top:358px;" width="36" height="30" viewBox="0 0 36 30"><circle cx="18.4" cy="14.6" r="10.6" fill="none" stroke="#4a86c6" stroke-width="1.3"/><rect x="2.2" y="7" width="13.6" height="16" fill="#323a45"/><path d="M4.4 8.6 H10 L13.6 12.2 V20.4 H4.4 Z" fill="none" stroke="#fff" stroke-width="1.7"/><path d="M9.6 8.8 V12.6 H13.4" fill="none" stroke="#fff" stroke-width="1.2"/><rect x="20" y="7" width="13" height="15.4" fill="#323a45"/><ellipse cx="26.4" cy="11.6" rx="2.9" ry="3.2" fill="#fff"/><path d="M21 21 V19 Q21 15.8 24 15.6 Q26.4 17 28.8 15.6 Q31.8 15.8 31.8 19 V21 Z" fill="#fff"/></svg>
<svg style="position:absolute;left:17px;top:415px;" width="30" height="31" viewBox="0 0 30 31"><rect x="10.6" y="3" width="8.6" height="6" rx="1" fill="none" stroke="#fff" stroke-width="1.9"/><rect x="10.6" y="12.2" width="8.6" height="6" rx="1" fill="none" stroke="#fff" stroke-width="1.9"/><rect x="10.6" y="21.4" width="8.6" height="6" rx="1" fill="none" stroke="#fff" stroke-width="1.9"/><path d="M8 6 H5.6 Q3 6 3 8.6 Q3 11 5.6 11 M4.2 9.4 L5.8 11 L4.2 12.6" fill="none" stroke="#4a86c6" stroke-width="1.2"/><path d="M22 15.2 H24.4 Q27 15.2 27 17.8 Q27 20.4 24.4 20.4 H22.6 M24.2 18.8 L22.6 20.4 L24.2 22" fill="none" stroke="#4a86c6" stroke-width="1.2"/></svg>
<svg style="position:absolute;left:15px;top:473px;" width="33" height="31" viewBox="0 0 33 31"><path d="M17 4.6 Q19.6 2.6 22.6 3.8 L31.2 11.4 L27.4 15.4 L24.2 12.4 L21.6 14.2 L18.2 10.6 L20.2 8.4 Q19 6 17 4.6 Z" fill="#fff"/><path d="M15 20.8 L7.4 26.2" stroke="#4a86c6" stroke-width="5" stroke-linecap="butt"/><path d="M10 10 L23.2 23.4" stroke="#fff" stroke-width="5.8" stroke-linecap="round"/><circle cx="8.4" cy="9" r="6.9" fill="#fff"/><path d="M8.6 9.2 L-1 -0.4" stroke="#323a45" stroke-width="5.4"/><circle cx="23.3" cy="23.5" r="1.5" fill="#323a45"/></svg>
<svg style="position:absolute;left:16.45px;top:530.45px;" width="30" height="30" viewBox="0 0 30 30"><path d="M17.05 28.55 L12.95 28.55 L12.48 24.88 L10.58 24.19 L7.86 26.69 L4.72 24.06 L6.71 20.95 L5.71 19.20 L2.02 19.37 L1.30 15.34 L4.83 14.23 L5.18 12.24 L2.25 10.00 L4.29 6.45 L7.70 7.87 L9.25 6.58 L8.44 2.97 L12.29 1.57 L13.99 4.85 L16.01 4.85 L17.71 1.57 L21.56 2.97 L20.75 6.58 L22.30 7.87 L25.71 6.45 L27.75 10.00 L24.82 12.24 L25.17 14.23 L28.70 15.34 L27.98 19.37 L24.29 19.20 L23.29 20.95 L25.28 24.06 L22.14 26.69 L19.42 24.19 L17.52 24.88 Z" fill="#fff" stroke="#fff" stroke-width="1.2" stroke-linejoin="round"/><circle cx="15" cy="15" r="5.5" fill="#323a45"/></svg>
</div>

</div></div></div>
</body>
</html>
